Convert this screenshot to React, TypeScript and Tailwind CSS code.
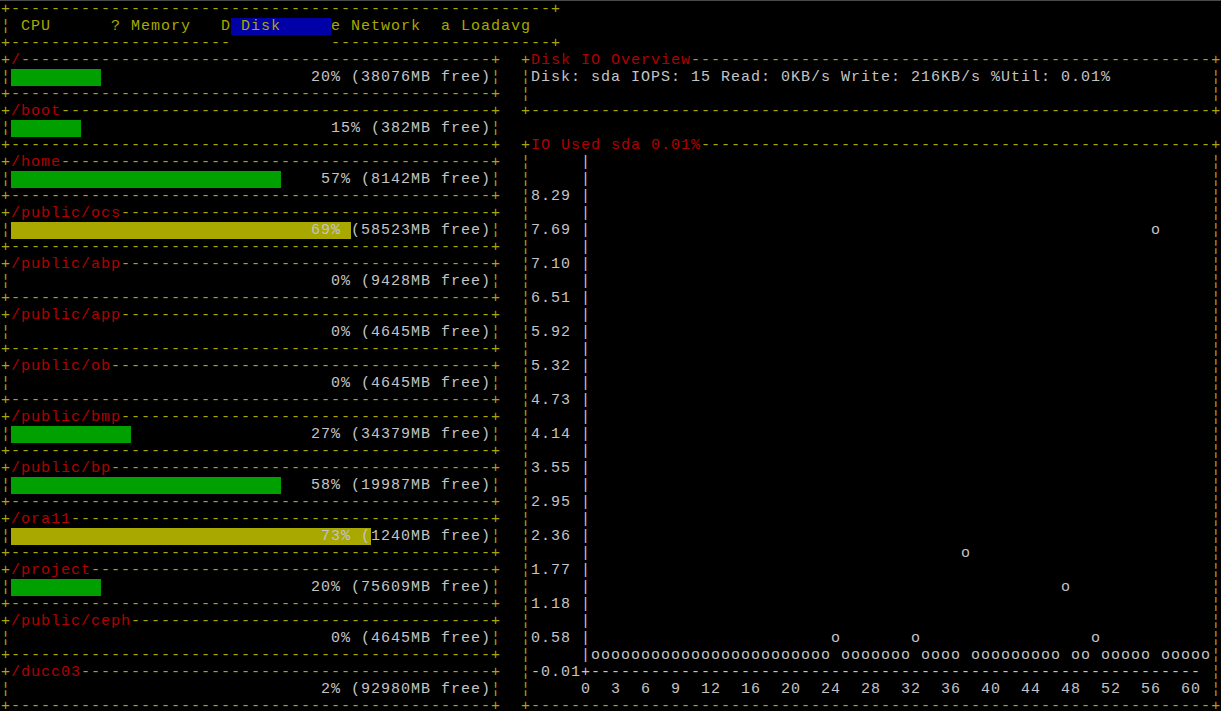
type Fg = 'y' | 'r' | 'w'
type Bg = 'g' | 'o' | 'u'
type Seg = { t: string; fg?: Fg; bg?: Bg }

// terminal palette
const FG: Record<Fg, string> = {
  y: 'text-[#a8a800]',
  r: 'text-[#b00000]',
  w: 'text-[#c4c4c4]',
}
const BG: Record<Bg, string> = {
  g: 'bg-[#00a000]',
  o: 'bg-[#a8a800]',
  u: 'bg-[#0000a8]',
}

const dash = (n: number) => '-'.repeat(Math.max(0, n))
const sp = (n: number) => ' '.repeat(Math.max(0, n))

function Line({ segs }: { segs: Seg[] }) {
  return (
    <div className="flex h-[17px] whitespace-pre">
      {segs.map((s, i) => (
        <span key={i} className={`${FG[s.fg ?? 'w']} ${s.bg ? BG[s.bg] : ''}`}>
          {s.t}
        </span>
      ))}
    </div>
  )
}

// "+label-------+" box top edge, width in cells
function top(width: number, label = ''): Seg[] {
  return [
    { t: '+', fg: 'y' },
    { t: label, fg: 'r' },
    { t: dash(width - 2 - label.length), fg: 'y' },
    { t: '+', fg: 'y' },
  ]
}

function side(content: Seg[]): Seg[] {
  return [{ t: '¦', fg: 'y' }, ...content, { t: '¦', fg: 'y' }]
}

function TabBar() {
  return (
    <div className="w-[560px]">
      <Line segs={top(56)} />
      <Line
        segs={[
          { t: '¦', fg: 'y' },
          { t: ' CPU      ? Memory   D', fg: 'y' },
          { t: ' Disk     ', fg: 'y', bg: 'u' },
          { t: 'e Network  a Loadavg   ', fg: 'y' },
        ]}
      />
      <Line
        segs={[
          { t: '+' + dash(22), fg: 'y' },
          { t: sp(10) },
          { t: dash(22) + '+', fg: 'y' },
        ]}
      />
    </div>
  )
}

type Disk = { mount: string; pct: number; free: number; bar: number; tone?: Bg }

const disks: Disk[] = [
  { mount: '/', pct: 20, free: 38076, bar: 9, tone: 'g' },
  { mount: '/boot', pct: 15, free: 382, bar: 7, tone: 'g' },
  { mount: '/home', pct: 57, free: 8142, bar: 27, tone: 'g' },
  { mount: '/public/ocs', pct: 69, free: 58523, bar: 34, tone: 'o' },
  { mount: '/public/abp', pct: 0, free: 9428, bar: 0 },
  { mount: '/public/app', pct: 0, free: 4645, bar: 0 },
  { mount: '/public/ob', pct: 0, free: 4645, bar: 0 },
  { mount: '/public/bmp', pct: 27, free: 34379, bar: 12, tone: 'g' },
  { mount: '/public/bp', pct: 58, free: 19987, bar: 27, tone: 'g' },
  { mount: '/ora11', pct: 73, free: 1240, bar: 36, tone: 'o' },
  { mount: '/project', pct: 20, free: 75609, bar: 9, tone: 'g' },
  { mount: '/public/ceph', pct: 0, free: 4645, bar: 0 },
  { mount: '/ducc03', pct: 2, free: 92980, bar: 0 },
]

function DiskGauge({ d }: { d: Disk }) {
  const inner = 48
  const text = `${d.pct}% (${d.free}MB free)`
  const start = inner - text.length
  let body: Seg[]
  if (d.bar <= start) {
    body = [{ t: sp(d.bar), bg: d.tone }, { t: sp(start - d.bar) }, { t: text }]
  } else {
    const cut = d.bar - start
    body = [
      { t: sp(start), bg: d.tone },
      { t: text.slice(0, cut), bg: d.tone },
      { t: text.slice(cut) },
    ]
  }
  return (
    <div>
      <Line segs={top(50, d.mount)} />
      <Line segs={side(body)} />
      <Line segs={top(50)} />
    </div>
  )
}

function Overview() {
  const txt = 'Disk: sda IOPS: 15 Read: 0KB/s Write: 216KB/s %Util: 0.01%'
  return (
    <div>
      <Line segs={top(70, 'Disk IO Overview')} />
      <Line segs={side([{ t: txt + sp(68 - txt.length) }])} />
      <Line segs={side([{ t: sp(68) }])} />
      <Line segs={top(70)} />
    </div>
  )
}

const yLabels: Record<number, string> = {
  11: '8.29', 13: '7.69', 15: '7.10', 17: '6.51', 19: '5.92', 21: '5.32', 23: '4.73',
  25: '4.14', 27: '3.55', 29: '2.95', 31: '2.36', 33: '1.77', 35: '1.18', 37: '0.58',
}

// [row, local col] of raised samples
const points: [number, number][] = [
  [13, 62], [32, 43], [34, 53], [37, 30], [37, 38], [37, 56],
]

function chartRows(): string[] {
  const out: string[] = []
  for (let row = 9; row <= 40; row++) {
    const cells = sp(68).split('')
    if (row <= 38) {
      const lab = yLabels[row]
      if (lab) lab.split('').forEach((c, i) => (cells[i] = c))
      cells[5] = '|'
    }
    if (row === 38) {
      const data =
        'o'.repeat(24) + ' ' + 'o'.repeat(7) + ' ' + 'o'.repeat(4) + ' ' +
        'o'.repeat(9) + ' ' + 'o'.repeat(2) + ' ' + 'o'.repeat(5) + ' ' + 'o'.repeat(5)
      data.split('').forEach((c, i) => (cells[6 + i] = c))
    }
    if (row === 39) {
      ;('-0.01+' + dash(61)).split('').forEach((c, i) => (cells[i] = c))
    }
    if (row === 40) {
      ;(sp(5) + '0  3  6  9  12  16  20  24  28  32  36  40  44  48  52  56  60')
        .split('')
        .forEach((c, i) => (cells[i] = c))
    }
    points.forEach(([r, c]) => {
      if (r === row) cells[c] = 'o'
    })
    out.push(cells.join(''))
  }
  return out
}

function IoChart() {
  return (
    <div>
      <Line segs={top(70, 'IO Used sda 0.01%')} />
      {chartRows().map((r, i) => (
        <Line key={i} segs={side([{ t: r }])} />
      ))}
      <Line segs={top(70)} />
    </div>
  )
}

export default function App() {
  return (
    <div className="h-[711px] w-[1221px] overflow-hidden border-t border-[#4a4a4a] bg-black pl-px font-['Liberation_Mono',monospace] text-[15px] leading-[17px] tracking-[1px]">
      <TabBar />
      <div className="flex">
        <div className="w-[500px]">
          {disks.map((d) => (
            <DiskGauge key={d.mount} d={d} />
          ))}
        </div>
        <div className="w-[20px]" />
        <div className="w-[700px]">
          <Overview />
          <div className="h-[17px]" />
          <IoChart />
        </div>
      </div>
    </div>
  )
}
